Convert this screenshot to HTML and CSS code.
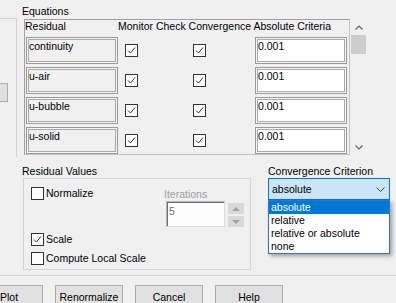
FILE: index.html
```html
<!DOCTYPE html>
<html lang="en">

<head>
  <meta charset="UTF-8">
  <meta name="viewport" content="width=device-width, initial-scale=1.0">
  <title>Residual Monitors</title>
  <link rel="stylesheet" href="styles.css">
</head>

<body>
  <div class="dialog">
    <div class="upper">
      <div class="side">
        <div class="side-btn"></div>
      </div>

      <div class="equations">
        <div class="group-label">Equations</div>
        <div class="eq-body">
          <div class="eq-frame">
            <div class="eq-head">
              <span class="col-res">Residual</span>
              <span>Monitor Check Convergence Absolute Criteria</span>
            </div>
            <div class="eq-rows">
              <div class="eq-row">
                <div class="cell res">continuity</div>
                <span class="check"><svg viewBox="0 0 11 11"><path d="M2 5.5l2.5 2.5L9 2.5" /></svg></span>
                <span class="check"><svg viewBox="0 0 11 11"><path d="M2 5.5l2.5 2.5L9 2.5" /></svg></span>
                <div class="cell crit">0.001</div>
              </div>
              <div class="eq-row">
                <div class="cell res">u-air</div>
                <span class="check"><svg viewBox="0 0 11 11"><path d="M2 5.5l2.5 2.5L9 2.5" /></svg></span>
                <span class="check"><svg viewBox="0 0 11 11"><path d="M2 5.5l2.5 2.5L9 2.5" /></svg></span>
                <div class="cell crit">0.001</div>
              </div>
              <div class="eq-row">
                <div class="cell res">u-bubble</div>
                <span class="check"><svg viewBox="0 0 11 11"><path d="M2 5.5l2.5 2.5L9 2.5" /></svg></span>
                <span class="check"><svg viewBox="0 0 11 11"><path d="M2 5.5l2.5 2.5L9 2.5" /></svg></span>
                <div class="cell crit">0.001</div>
              </div>
              <div class="eq-row">
                <div class="cell res">u-solid</div>
                <span class="check"><svg viewBox="0 0 11 11"><path d="M2 5.5l2.5 2.5L9 2.5" /></svg></span>
                <span class="check"><svg viewBox="0 0 11 11"><path d="M2 5.5l2.5 2.5L9 2.5" /></svg></span>
                <div class="cell crit">0.001</div>
              </div>
            </div>
          </div>

          <div class="vscroll">
            <div class="arrow"><svg width="8" height="5" viewBox="0 0 8 5"><path d="M0.5 4.5L4 1l3.5 3.5" /></svg></div>
            <div class="thumb"></div>
            <div class="arrow down"><svg width="8" height="5" viewBox="0 0 8 5"><path d="M0.5 0.5L4 4l3.5-3.5" /></svg></div>
          </div>
        </div>
      </div>
    </div>

    <div class="lower">
      <div class="rv">
        <div class="group-label">Residual Values</div>
        <div class="rv-box">
          <div class="rv-top">
            <div class="opt"><span class="check"></span>Normalize</div>
            <div class="iter">
              <div class="iter-label">Iterations</div>
              <div class="iter-field">
                <div class="spin-input">5</div>
                <div class="spin">
                  <span class="spin-btn"><i class="tri-up"></i></span>
                  <span class="spin-btn"><i class="tri-down"></i></span>
                </div>
              </div>
            </div>
          </div>
          <div class="opt gap"><span class="check"><svg viewBox="0 0 11 11"><path d="M2 5.5l2.5 2.5L9 2.5" /></svg></span>Scale</div>
          <div class="opt gap"><span class="check"></span>Compute Local Scale</div>
        </div>
      </div>

      <div class="crit-col">
        <div class="group-label">Convergence Criterion</div>
        <div class="combo">
          <span>absolute</span>
          <svg class="chevron" width="9" height="5" viewBox="0 0 9 5"><path d="M0.5 0.5L4.5 4.5l4-4" /></svg>
          <!-- open dropdown list -->
          <ul class="combo-list">
            <li class="selected">absolute</li>
            <li>relative</li>
            <li>relative or absolute</li>
            <li>none</li>
          </ul>
        </div>
      </div>
    </div>

    <div class="sep"></div>

    <div class="buttons">
      <button>Plot</button>
      <button>Renormalize</button>
      <button>Cancel</button>
      <button>Help</button>
    </div>
  </div>
</body>

</html>
```

FILE: styles.css
```css
html,
body {
  margin: 0;
  padding: 0;
  overflow: hidden;
}

body {
  background-color: #f0f0f0;
  font-family: "Liberation Sans", Arial, sans-serif;
  font-size: 10.5px;
  line-height: 13px;
  color: #000;
}

.dialog {
  width: 396px;
  height: 303px;
}

/* Top part: cut-off panel on the left and the equations table */
.upper {
  display: flex;
}

.side {
  width: 16px;
  height: 138px;
  margin-top: 18px;
  border-top: 1px solid #d3d3d3;
  border-right: 1px solid #d3d3d3;
}

.side-btn {
  width: 20px;
  height: 19px;
  box-sizing: border-box;
  margin-top: 64px;
  margin-left: -12px;
  background-color: #e1e1e1;
  border: 1px solid #adadad;
}

.equations {
  margin-left: 5px;
  padding-top: 5px;
}

.group-label {
  height: 13px;
}

.eq-body {
  display: flex;
  margin-top: 1px;
  margin-left: 2px;
}

.eq-frame {
  width: 326px;
  height: 136px;
  box-sizing: border-box;
  border: 1px solid #a0a0a0;
  border-right-color: #c4c4c4;
  border-bottom-color: #c4c4c4;
}

.eq-head {
  display: flex;
  height: 17px;
  box-sizing: border-box;
  padding-bottom: 4px;
}

.col-res {
  width: 93px;
}

.eq-rows {
  display: grid;
  row-gap: 3px;
  padding-left: 1px;
}

.eq-row {
  display: grid;
  grid-template-columns: 92px 68px 69px 92px;
  height: 27px;
}

.cell {
  height: 27px;
  box-sizing: border-box;
  border: 1px solid #9a9a9a;
  box-shadow: inset 0 0 0 1px #f6f6f6, inset 0 0 0 2px #a9a9a9;
  padding: 2px 0 0 2px;
}

.cell.crit {
  background-color: #fff;
}

.check {
  display: block;
  width: 13px;
  height: 13px;
  box-sizing: border-box;
  border: 1px solid #333;
  background-color: #fff;
}

.check svg {
  display: block;
  width: 11px;
  height: 11px;
}

.check path {
  fill: none;
  stroke: #333;
  stroke-width: 1;
}

.eq-row .check {
  margin: 7px 0 0 7px;
}

/* Vertical scroll bar */
.vscroll {
  display: flex;
  flex-direction: column;
  width: 17px;
  height: 136px;
}

.arrow {
  display: flex;
  align-items: center;
  justify-content: center;
  height: 16px;
}

.arrow.down {
  margin-top: auto;
}

.arrow path,
.chevron path {
  fill: none;
  stroke: #606060;
  stroke-width: 1.2;
}

.thumb {
  width: 15px;
  height: 19px;
  margin-left: 1px;
  background-color: #cdcdcd;
}

/* Bottom part */
.lower {
  display: flex;
  margin-top: 8px;
  padding-left: 22px;
}

.rv {
  width: 229px;
}

.rv-box {
  width: 228px;
  box-sizing: border-box;
  margin-left: 1px;
  border: 1px solid #d5d5d5;
  padding: 8px 6px 4px 7px;
}

.rv-top {
  display: flex;
  justify-content: space-between;
  height: 40px;
}

.opt {
  display: flex;
  align-items: center;
  gap: 2px;
  height: 13px;
}

.opt.gap {
  margin-top: 6px;
}

.iter {
  margin-top: 1px;
}

.iter-label {
  margin-left: -2px;
  color: #a0a0a0;
}

.iter-field {
  display: flex;
  gap: 3px;
}

.spin-input {
  width: 59px;
  height: 26px;
  box-sizing: border-box;
  padding: 3px 0 0 2px;
  background-color: #fcfcfc;
  color: #6d6d6d;
  border: 1px solid;
  border-color: #b4b4b4 #dcdcdc #dcdcdc #b4b4b4;
  box-shadow: inset 1px 1px 0 #6f6f6f;
}

.spin {
  display: flex;
  flex-direction: column;
  gap: 2px;
  margin-top: 2px;
}

.spin-btn {
  display: flex;
  align-items: center;
  justify-content: center;
  width: 16px;
  height: 11px;
  background-color: #d9d9d9;
}

.tri-up,
.tri-down {
  width: 0;
  height: 0;
  border-left: 4px solid transparent;
  border-right: 4px solid transparent;
}

.tri-up {
  border-bottom: 4px solid #a3a3a3;
}

.tri-down {
  border-top: 4px solid #a3a3a3;
}

.crit-col {
  width: 122px;
  margin-left: 17px;
}

.combo {
  position: relative;
  display: flex;
  justify-content: space-between;
  align-items: flex-start;
  height: 22px;
  box-sizing: border-box;
  padding: 4px 0 0 3px;
  background-color: #cce4f7;
  border: 1px solid #0078d7;
}

.chevron {
  margin: 4px 4px 0 0;
}

.chevron path {
  stroke: #444;
  stroke-width: 1;
}

.combo-list {
  position: absolute;
  top: calc(100% + 1px);
  left: -1px;
  width: 122px;
  box-sizing: border-box;
  margin: 0;
  padding: 0;
  list-style: none;
  background-color: #fff;
  border: 1px solid #3a74b6;
  box-shadow: 2px 2px 4px rgba(0, 0, 0, 0.35);
  z-index: 10;
}

.combo-list li {
  height: 13px;
  padding-left: 2px;
}

.combo-list li.selected {
  background-color: #0078d7;
  color: #fff;
}

.sep {
  margin-top: 5px;
  border-top: 1px solid #d0d0d0;
}

.buttons {
  display: flex;
  gap: 12px;
  margin-top: 9px;
  margin-left: -25px;
}

.buttons button {
  width: 68px;
  height: 23px;
  flex: none;
  box-sizing: border-box;
  margin: 0;
  padding: 2px 0 0;
  font: inherit;
  line-height: 13px;
  color: #000;
  text-align: center;
  vertical-align: top;
  align-self: flex-start;
  background-color: #e1e1e1;
  border: 1px solid #adadad;
  border-radius: 0;
}
```
